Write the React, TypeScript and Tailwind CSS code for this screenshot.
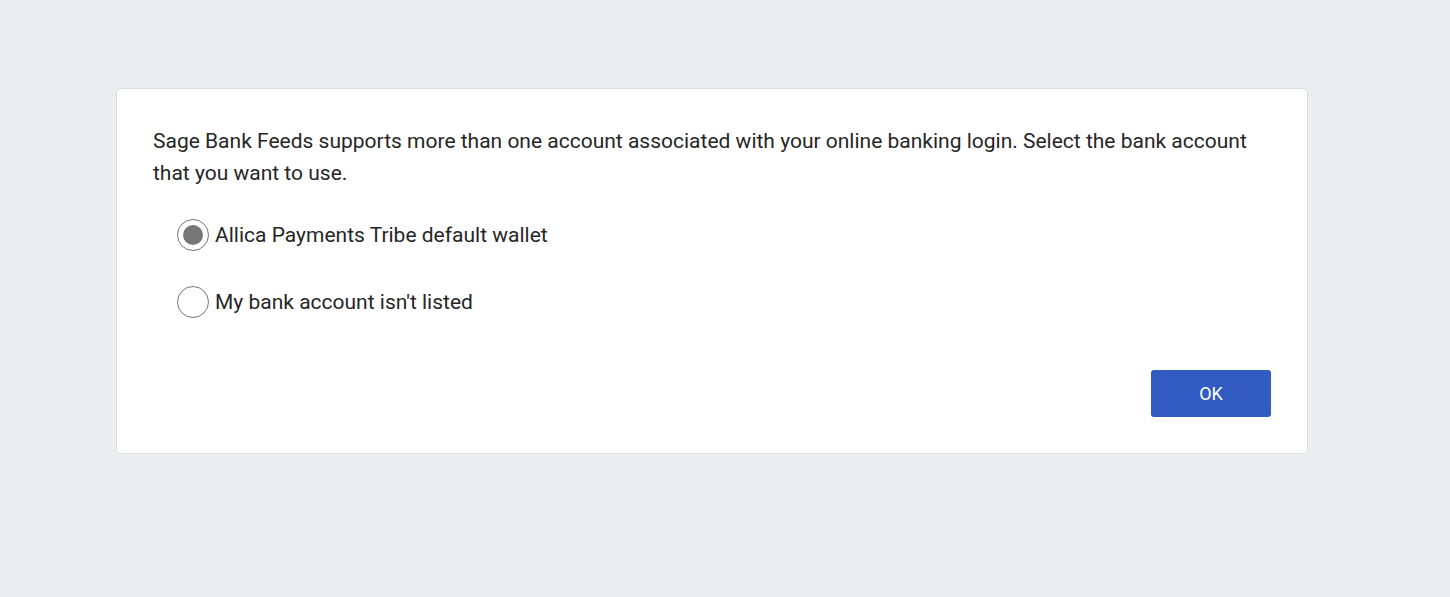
export default function App() {
  const options = [
    { label: "Allica Payments Tribe default wallet", checked: true },
    { label: "My bank account isn't listed", checked: false },
  ];

  return (
    <div className="min-h-[597px] w-full bg-[#ecedef] pt-[88px] font-['Roboto',sans-serif] text-[#262626]">
      <div className="ml-[116px] w-[1192px] rounded-[5px] border border-[#dcdde0] bg-white px-9 pt-9 pb-9">
        <p className="text-[21px] leading-[32px]">
          Sage Bank Feeds supports more than one account associated with your online banking login. Select the bank account
          that you want to use.
        </p>

        <div className="mt-[30px] flex flex-col gap-[35px] pl-6">
          {options.map((option) => (
            <label key={option.label} className="flex h-8 items-center gap-[6px]">
              <span className="flex h-8 w-8 items-center justify-center rounded-full border-[1.5px] border-[#767676]">
                {option.checked && <span className="h-5 w-5 rounded-full bg-[#767676]" />}
              </span>
              <span className="text-[21px] leading-8">{option.label}</span>
            </label>
          ))}
        </div>

        <div className="mt-[52px] flex justify-end">
          <button className="h-[47px] w-[120px] rounded-[3px] bg-[#325bc2] text-[18px] text-white">OK</button>
        </div>
      </div>
    </div>
  );
}
